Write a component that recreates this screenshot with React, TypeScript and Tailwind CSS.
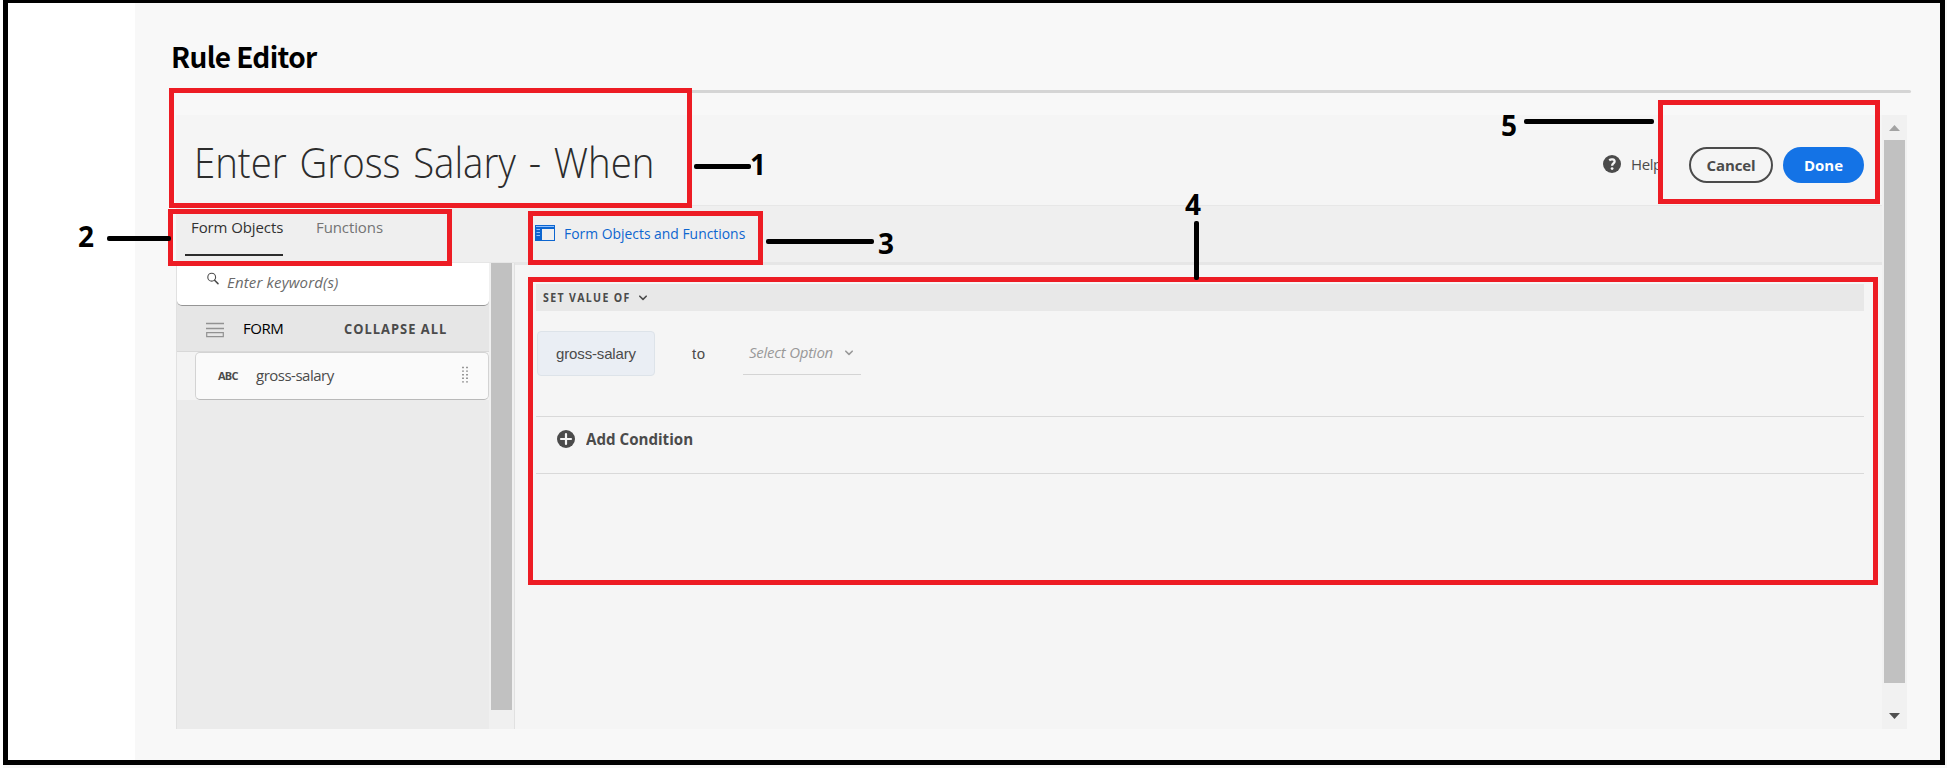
import React from "react";

const CALLOUT_BOXES = [
  "left-[169px] top-[88px] w-[523px] h-[120px]",
  "left-[168px] top-[209px] w-[284px] h-[57px]",
  "left-[528px] top-[211px] w-[235px] h-[54px]",
  "left-[528px] top-[277px] w-[1350px] h-[308px]",
  "left-[1658px] top-[100px] w-[222px] h-[104px]",
];

const CALLOUT_LINES = [
  "left-[694px] top-[164px] w-[57px] h-[5px]",
  "left-[107px] top-[236px] w-[64px] h-[5px]",
  "left-[766px] top-[239px] w-[108px] h-[5px]",
  "left-[1194px] top-[221px] w-[5px] h-[59px]",
  "left-[1524px] top-[119px] w-[130px] h-[5px]",
];

const CALLOUT_NUMBERS = [
  { label: "1", place: "left-[750px] top-[144px]" },
  { label: "2", place: "left-[78px] top-[216px]" },
  { label: "3", place: "left-[878px] top-[223px]" },
  { label: "4", place: "left-[1185px] top-[184px]" },
  { label: "5", place: "left-[1501px] top-[105px]" },
];

function Callouts() {
  return (
    <div className="pointer-events-none absolute inset-0 z-20">
      {CALLOUT_BOXES.map((c) => (
        <div key={c} className={`absolute border-[5px] border-[#ed1c24] ${c}`} />
      ))}
      {CALLOUT_LINES.map((c) => (
        <div key={c} className={`absolute rounded-[2px] bg-black ${c}`} />
      ))}
      {CALLOUT_NUMBERS.map((n) => (
        <div key={n.label} className={`absolute text-[28px] leading-[40px] font-bold text-black ${n.place}`}>
          {n.label}
        </div>
      ))}
    </div>
  );
}

function Chevron({ className }: { className?: string }) {
  return (
    <svg className={className} width="10" height="8" viewBox="0 0 10 8" fill="none">
      <path d="M1.8 2.2 5 5.4 8.2 2.2" stroke="currentColor" strokeWidth="1.6" strokeLinecap="round" strokeLinejoin="round" />
    </svg>
  );
}

function Header() {
  return (
    <header className="flex h-[91px] items-start justify-between border-b border-[#e7e7e7]">
      <h2 className="mt-[27px] ml-[18px] origin-left scale-x-[0.914] text-[42px] leading-[40px] font-light whitespace-nowrap text-[#2c2c2c] [word-spacing:3px]">
        Enter Gross Salary - When
      </h2>
      <div className="mt-8 mr-[18px] flex h-9 items-center">
        <svg className="mb-[2px]" width="18" height="18" viewBox="0 0 18 18">
          <circle cx="9" cy="9" r="9" fill="#4b4b4b" />
          <path
            d="M6.2 5.2C7.9 4 11.6 3.9 11.6 6.5c0 2-2.5 2-2.5 4.3"
            fill="none"
            stroke="#f5f5f5"
            strokeWidth="2.3"
          />
          <circle cx="9.1" cy="13.6" r="1.4" fill="#f5f5f5" />
        </svg>
        <div className="ml-[10px] h-[22px] w-[30px] overflow-hidden text-[15px] leading-[20px] tracking-[-0.4px] text-[#4b4b4b]">
          Help
        </div>
        <button className="ml-[28px] h-9 w-[84px] rounded-full border-2 border-[#4b4b4b] text-[15px] leading-[32px] font-bold tracking-[-0.1px] text-[#4b4b4b]">
          Cancel
        </button>
        <button className="ml-[10px] h-9 w-[81px] rounded-full bg-[#1473e6] text-[15px] leading-[36px] font-bold text-white">
          Done
        </button>
      </div>
    </header>
  );
}

function Toolbar() {
  return (
    <nav className="flex h-[59px] items-start border-b-[3px] border-[#e6e6e6] bg-[#efefef]">
      <div className="ml-[9px] h-[50px] w-[98px] border-b-2 border-[#2c2c2c] pt-[11px] pl-[6px] text-[15px] leading-5 tracking-[-0.1px] whitespace-nowrap text-[#323232]">
        Form Objects
      </div>
      <div className="ml-[33px] w-[70px] pt-[11px] text-[15px] leading-5 tracking-[-0.1px] text-[#747474]">
        Functions
      </div>
      <div className="ml-[149px] flex pt-[18px] text-[#0d66d0]">
        <svg className="mt-px" width="20" height="16" viewBox="0 0 20 16">
          <path fill="#0d66d0" d="M0 0h20v16H0z" />
          <path stroke="#8fc0ff" strokeWidth="1" d="M1 1.5h18M1.5 4.5H5M1.5 7.5H5M1.5 10.5H5" />
          <path fill="#efefef" d="M7 4h12v11H7z" />
        </svg>
        <span className="-mt-px ml-[9px] origin-left scale-x-[0.926] text-[15px] leading-5 whitespace-nowrap">
          Form Objects and Functions
        </span>
      </div>
    </nav>
  );
}

function Sidebar() {
  return (
    <aside className="relative z-10 -mt-[2px] flex w-[339px] shrink-0 border-x border-[#e1e1e1] bg-[#ebebeb]">
      <div className="flex w-[312px] flex-col">
        <div className="bg-[#e6e6e6]">
          <div className="flex h-[43px] rounded-b-[5px] border-b border-[#959595] bg-white">
            <svg className="mt-[9px] ml-[30px]" width="12" height="13" viewBox="0 0 12 13" fill="none" stroke="#4b4b4b">
              <circle cx="4.7" cy="5.2" r="3.9" strokeWidth="1.1" />
              <path d="M7.6 8.2 11 11.6" strokeWidth="1.5" strokeLinecap="round" />
            </svg>
            <span className="mt-[9px] ml-[8px] text-[15px] leading-5 tracking-[0.15px] whitespace-nowrap text-[#6a6a6a] italic">
              Enter keyword(s)
            </span>
          </div>
        </div>
        <div className="flex h-[46px] items-center border-b border-[#d8d8d8] bg-[#e6e6e6]">
          <svg className="mt-[2px] ml-[29px]" width="18" height="16" viewBox="0 0 18 16" fill="none" stroke="#929292">
            <path d="M0 1.5h18M0 6.5h18" strokeWidth="1.3" />
            <path d="M.7 10.7h16.6v4H.7z" strokeWidth="1.2" />
          </svg>
          <span className="ml-[19px] w-[42px] text-[15px] tracking-[-0.5px] text-black">FORM</span>
          <span className="ml-[59px] origin-left scale-x-[0.92] text-[14px] font-bold tracking-[1.1px] whitespace-nowrap text-[#4b4b4b]">
            COLLAPSE ALL
          </span>
        </div>
        <div className="flex h-[48px] bg-[#f3f3f3] pl-[18px]">
          <div className="flex h-[48px] w-[294px] items-center rounded-[5px] border border-[#d3d3d3] border-b-[#b9b9b9] bg-[#fafafa]">
            <span className="ml-[22px] w-[24px] text-[11px] font-bold tracking-[-0.8px] text-[#4b4b4b]">ABC</span>
            <span className="mb-[2px] ml-[14px] w-[90px] text-[15px] leading-5 tracking-[-0.5px] whitespace-nowrap text-[#4b4b4b]">
              gross-salary
            </span>
            <svg className="mb-[3px] ml-[116px]" width="6" height="17" viewBox="0 0 6 17">
              <path d="M1 .8v16M5 .8v16" stroke="#6e6e6e" strokeWidth="1.4" strokeDasharray="1.4 2.2" />
            </svg>
          </div>
        </div>
      </div>
      <div className="flex w-[25px] justify-center bg-[#f0f0f0]">
        <div className="h-[447px] w-[21px] bg-[#c1c1c1]" />
      </div>
    </aside>
  );
}

function RulePanel() {
  return (
    <section className="flex flex-1 flex-col pt-[19px] pr-[18px] pl-[21px]">
      <div className="flex h-[27px] items-center bg-[#e8e8e8] pl-[7px] text-[#4b4b4b]">
        <span className="w-[95px] origin-left scale-x-[0.92] text-[11.5px] font-bold tracking-[1.45px] whitespace-nowrap">
          SET VALUE OF
        </span>
        <Chevron />
      </div>
      <div className="mt-5 ml-px flex h-[45px] items-start">
        <div className="flex h-[45px] w-[118px] items-center justify-center rounded-[4px] border border-[#dde3e9] bg-[#eaeef4] pt-px font-['Liberation_Sans',Arial,sans-serif] text-[15px] tracking-[-0.15px] text-[#4b4b4b]">
          gross-salary
        </div>
        <span className="ml-[37px] w-[51px] pt-[13px] font-['Liberation_Sans',Arial,sans-serif] text-[15px] leading-5 tracking-[0.6px] text-[#4b4b4b]">
          to
        </span>
        <div className="flex h-[44px] w-[118px] items-start border-b border-[#d4d4d4] pt-[11px] pl-[6px] text-[#999]">
          <span className="text-[15px] leading-5 tracking-[-0.25px] whitespace-nowrap italic">Select Option</span>
          <Chevron className="mt-[7px] ml-[11px]" />
        </div>
      </div>
      <div className="mt-10 flex h-[58px] items-start border-y border-[#d9d9d9] pt-[13px] pl-[21px] text-[#4b4b4b]">
        <svg width="18" height="18" viewBox="0 0 18 18">
          <circle cx="9" cy="9" r="9" fill="#4b4b4b" />
          <path d="M9 4v10M4 9h10" stroke="#f5f5f5" strokeWidth="2.2" strokeLinecap="round" />
        </svg>
        <span className="ml-[11px] origin-left scale-x-[0.945] text-[16px] leading-[18px] font-bold whitespace-nowrap">
          Add Condition
        </span>
      </div>
    </section>
  );
}

function PageScrollbar() {
  return (
    <div className="flex w-[25px] flex-col items-center bg-[#f1f1f1]">
      <svg className="mt-[10px]" width="11" height="6" viewBox="0 0 11 6">
        <path d="M5.5 0 11 6H0z" fill="#a3a3a3" />
      </svg>
      <div className="mt-[9px] h-[543px] w-[21px] bg-[#c1c1c1]" />
      <svg className="mt-[30px]" width="11" height="6" viewBox="0 0 11 6">
        <path d="M0 0h11L5.5 6z" fill="#505050" />
      </svg>
    </div>
  );
}

export default function App() {
  return (
    <div className="relative flex h-[768px] w-[1947px] items-start overflow-hidden bg-[#f8f8f8] font-['Open_Sans','Noto_Sans',sans-serif]">
      <div className="h-[768px] w-[3px] shrink-0 bg-white" />
      <div className="flex h-[765px] w-[1942px] shrink-0 border-[5px] border-t-[3px] border-black">
        <div className="w-[127px] shrink-0 bg-white" />
        <main className="flex-1 bg-[#f8f8f8] pl-[37px]">
          <h1 className="-ml-px h-[87px] pt-[33px] font-['Noto_Sans_CJK_JP','Noto_Sans',sans-serif] text-[28px] leading-10 font-bold tracking-[-0.65px] text-black">
            Rule Editor
          </h1>
          <div className="h-[3px] w-[1739px] rounded-full bg-[#d5d5d5]" />
          <div className="mt-[22px] ml-1 flex h-[614px] w-[1731px]">
            <div className="flex w-[1706px] flex-col bg-[#f5f5f5]">
              <Header />
              <Toolbar />
              <div className="flex flex-1">
                <Sidebar />
                <RulePanel />
              </div>
            </div>
            <PageScrollbar />
          </div>
        </main>
      </div>
      <Callouts />
    </div>
  );
}
